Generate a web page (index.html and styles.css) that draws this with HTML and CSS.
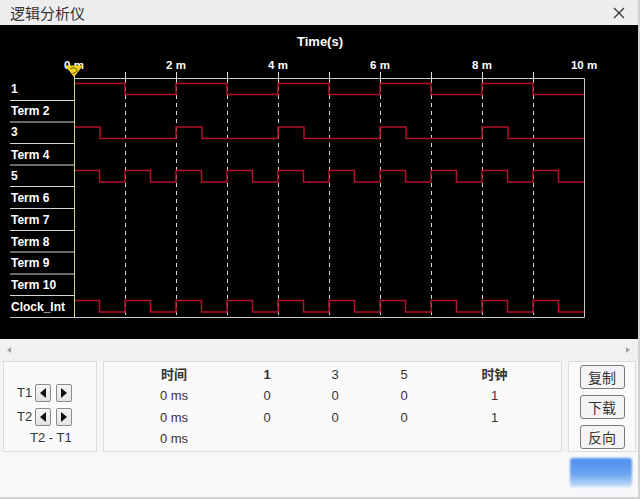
FILE: index.html
```html
<!DOCTYPE html>
<html lang="zh-CN">
<head>
<meta charset="utf-8">
<title>逻辑分析仪</title>
<link rel="stylesheet" href="styles.css">
</head>
<body>
<div class="window">
  <div class="titlebar">
    <span class="title">逻辑分析仪</span>
    <svg class="close" width="12" height="12" viewBox="0 0 12 12"><path d="M1 1L11 11M11 1L1 11"/></svg>
  </div>

  <div class="scope">
    <svg class="plot" width="638" height="314" viewBox="0 25 638 314">
      <text class="axis-title" x="320" y="46">Time(s)</text>
      <g class="ticklabels">
        <text x="74" y="69">0 m</text>
        <text x="176" y="69">2 m</text>
        <text x="278" y="69">4 m</text>
        <text x="380" y="69">6 m</text>
        <text x="482" y="69">8 m</text>
        <text x="584" y="69">10 m</text>
      </g>
      <g class="grid">
        <path class="dash" d="M125.5 79V317M176.5 79V317M227.5 79V317M278.5 79V317M329.5 79V317M380.5 79V317M431.5 79V317M482.5 79V317M533.5 79V317"/>
        <path class="tick" d="M125.5 72V79M176.5 72V79M227.5 72V79M278.5 72V79M329.5 72V79M380.5 72V79M431.5 72V79M482.5 72V79M533.5 72V79"/>
        <path class="frame" d="M74 78.5H584.5V317.5H10"/>
        <path class="sep" d="M10 100.5H74M10 122H74M10 143.5H74M10 165H74M10 186.5H74M10 208.5H74M10 230.5H74M10 252H74M10 274H74M10 295.5H74"/>
        <path class="cursor" d="M74.5 72V317"/>
      </g>
      <g class="labels">
        <text x="11" y="92.5">1</text>
        <text x="11" y="115">Term 2</text>
        <text x="11" y="136">3</text>
        <text x="11" y="158.5">Term 4</text>
        <text x="11" y="180">5</text>
        <text x="11" y="202">Term 6</text>
        <text x="11" y="224">Term 7</text>
        <text x="11" y="245.5">Term 8</text>
        <text x="11" y="267">Term 9</text>
        <text x="11" y="288.5">Term 10</text>
        <text x="11" y="310.5">Clock_Int</text>
      </g>
      <g class="waves">
        <path d="M75 83.5H125V94.5H176V83.5H227V94.5H278V83.5H329V94.5H380V83.5H431V94.5H482V83.5H533V94.5H584"/>
        <path d="M75 127H100V138.5H176V127H202V138.5H278V127H304V138.5H380V127H406V138.5H482V127H508V138.5H584"/>
        <path d="M75 170.5H99.5V182H125V170.5H150.5V182H176V170.5H201.5V182H227V170.5H252.5V182H278V170.5H303.5V182H329V170.5H354.5V182H380V170.5H405.5V182H431V170.5H456.5V182H482V170.5H507.5V182H533V170.5H558.5V182H584"/>
        <path d="M75 300.5H99.5V312H125V300.5H150.5V312H176V300.5H201.5V312H227V300.5H252.5V312H278V300.5H303.5V312H329V300.5H354.5V312H380V300.5H405.5V312H431V300.5H456.5V312H482V300.5H507.5V312H533V300.5H558.5V312H584"/>
      </g>
      <g class="marker">
        <path class="mk-fill" d="M65 65.5H83L74 77Z"/>
        <path class="mk-line" d="M70.5 68.5Q74 66.5 76.5 69T72.5 73.5"/>
      </g>
    </svg>
  </div>

  <div class="hscroll">
    <span class="arr arr-left"></span>
    <span class="arr arr-right"></span>
  </div>

  <div class="panels">
    <div class="panel cursors">
      <div class="crow">
        <span class="tname">T1</span>
        <button class="step"><span class="tri tri-left"></span></button>
        <button class="step"><span class="tri tri-right"></span></button>
      </div>
      <div class="crow">
        <span class="tname">T2</span>
        <button class="step"><span class="tri tri-left"></span></button>
        <button class="step"><span class="tri tri-right"></span></button>
      </div>
      <div class="diff">T2 - T1</div>
    </div>

    <div class="panel readout">
      <div class="cell head">时间</div>
      <div class="cell head">1</div>
      <div class="cell">3</div>
      <div class="cell">5</div>
      <div class="cell head">时钟</div>

      <div class="cell">0 ms</div>
      <div class="cell">0</div>
      <div class="cell">0</div>
      <div class="cell">0</div>
      <div class="cell">1</div>

      <div class="cell">0 ms</div>
      <div class="cell">0</div>
      <div class="cell">0</div>
      <div class="cell">0</div>
      <div class="cell">1</div>

      <div class="cell">0 ms</div>
      <div class="cell"></div>
      <div class="cell"></div>
      <div class="cell"></div>
      <div class="cell"></div>
    </div>

    <div class="panel actions">
      <button class="act">复制</button>
      <button class="act">下载</button>
      <button class="act">反向</button>
    </div>
  </div>

  <div class="footer">
    <div class="ok"></div>
  </div>
</div>
</body>
</html>
```

FILE: styles.css
```css
html, body {
  margin: 0;
  padding: 0;
}
body {
  width: 640px;
  height: 499px;
  background: #d2d2d4;
  font-family: "Liberation Sans", "Noto Sans CJK SC", sans-serif;
  overflow: hidden;
}
.window {
  width: 638px;
  height: 497px;
  background: #f7f7f9;
  display: flex;
  flex-direction: column;
}
.titlebar {
  height: 25px;
  flex: none;
  background: #eeeeef;
  display: flex;
  align-items: center;
  justify-content: space-between;
  padding: 0 13px 0 10px;
  box-sizing: border-box;
}
.title {
  font-family: "Noto Sans CJK SC", sans-serif;
  font-size: 15px;
  color: #333;
  line-height: 1;
  margin-top: -1px;
}
.close {
  stroke: #333;
  stroke-width: 1.2;
  fill: none;
  margin-top: 1px;
}
.scope {
  height: 314px;
  flex: none;
  background: #000;
}
.plot {
  display: block;
}
.plot text {
  fill: #fff;
  font-family: "Liberation Sans", sans-serif;
  font-weight: bold;
}
.axis-title {
  font-size: 13px;
  text-anchor: middle;
}
.ticklabels text {
  font-size: 11.5px;
  text-anchor: middle;
}
.labels text {
  font-size: 12px;
}
.grid path {
  fill: none;
}
.dash {
  stroke: #d8d8d8;
  stroke-width: 1;
  stroke-dasharray: 4 4;
}
.tick {
  stroke: #e0e0e0;
  stroke-width: 1;
}
.frame {
  stroke: #c9c9c9;
  stroke-width: 1;
}
.sep {
  stroke: #d6d6d6;
  stroke-width: 1;
}
.cursor {
  stroke: #c6e08a;
  stroke-width: 1;
}
.waves path {
  fill: none;
  stroke: #b3122a;
  stroke-width: 1.5;
}
.mk-fill {
  fill: #f2d31b;
}
.mk-line {
  fill: none;
  stroke: #6a5a10;
  stroke-width: 1;
}
.hscroll {
  height: 22px;
  flex: none;
  background: #f1f1f2;
  display: flex;
  align-items: center;
  justify-content: space-between;
  padding: 0 8px 0 7px;
  box-sizing: border-box;
}
.arr {
  width: 0;
  height: 0;
  border-top: 3px solid transparent;
  border-bottom: 3px solid transparent;
}
.arr-left {
  border-right: 4px solid #a0a0a0;
}
.arr-right {
  border-left: 4px solid #a0a0a0;
}
.panels {
  height: 91px;
  flex: none;
  display: flex;
  gap: 6px;
  padding-left: 3px;
  background: #f5f5f7;
}
.panel {
  border: 1px solid #dcdcde;
  background: #fafafb;
  box-sizing: border-box;
  height: 91px;
}
.cursors {
  width: 94px;
  display: flex;
  flex-direction: column;
  padding: 22px 0 0 13px;
  font-size: 13px;
  color: #333;
}
.crow {
  display: flex;
  align-items: center;
  height: 18px;
  margin-bottom: 6px;
}
.tname {
  width: 18px;
  line-height: 18px;
}
.step {
  width: 16px;
  height: 18px;
  padding: 0;
  margin: 0 5px 0 0;
  border: 1px solid #8a8a8a;
  border-radius: 2px;
  background: linear-gradient(#f6f6f6, #e4e4e4);
  display: flex;
  align-items: center;
  justify-content: center;
  box-sizing: border-box;
}
.tri {
  width: 0;
  height: 0;
  border-top: 5px solid transparent;
  border-bottom: 5px solid transparent;
}
.tri-left {
  border-right: 6px solid #111;
}
.tri-right {
  border-left: 6px solid #111;
}
.diff {
  margin-left: 13px;
  line-height: 16px;
  margin-top: -2px;
}
.readout {
  width: 459px;
  display: grid;
  grid-template-columns: 140px 46px 90px 48px 133px;
  grid-auto-rows: 21.33px;
  padding-top: 2px;
  font-size: 13px;
  color: #333;
  align-content: start;
}
.cell {
  text-align: center;
  line-height: 21.33px;
  white-space: nowrap;
}
.head {
  font-weight: bold;
  font-family: "Liberation Sans", "Noto Sans CJK SC", sans-serif;
}
.actions {
  width: 68px;
  display: flex;
  flex-direction: column;
  align-items: center;
  padding-top: 3px;
  gap: 6px;
}
.act {
  width: 45px;
  height: 24px;
  padding: 0;
  border: 1px solid #7a7a7a;
  border-radius: 3px;
  background: #f4f4f4;
  font-family: "Noto Sans CJK SC", sans-serif;
  font-size: 14px;
  color: #333;
  line-height: 22px;
}
.footer {
  flex: 1;
  display: flex;
  justify-content: flex-end;
  align-items: flex-start;
  padding: 6px 6px 0 0;
  background: #f8f8fa;
}
.ok {
  width: 62px;
  height: 29px;
  border-radius: 3px;
  background: linear-gradient(180deg, #4f8fee 0%, #6aa4f1 55%, #c9def9 100%);
  filter: blur(1.2px);
}
```
